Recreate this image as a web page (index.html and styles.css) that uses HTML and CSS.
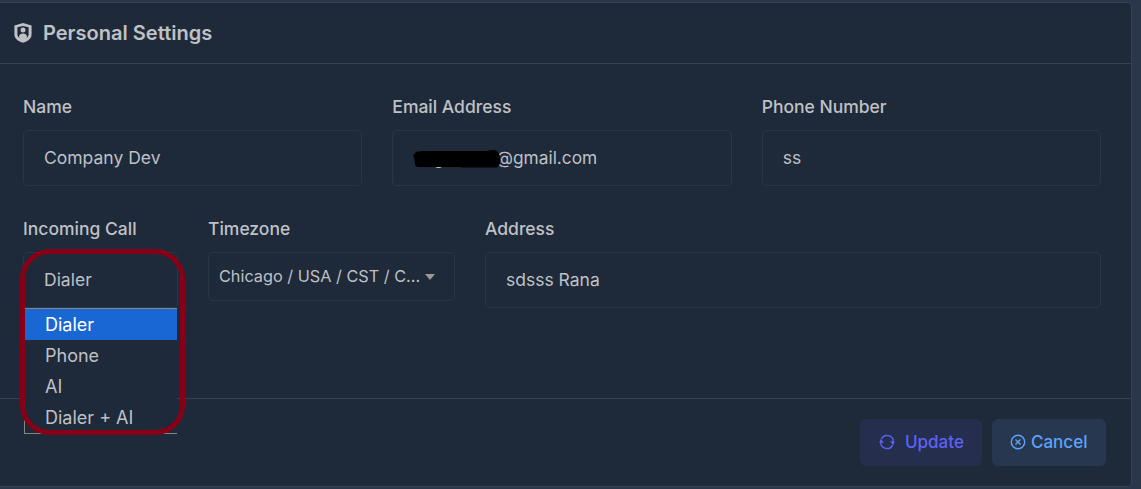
FILE: index.html
```html
<!DOCTYPE html>
<html lang="en">
<head>
<meta charset="utf-8">
<title>Personal Settings</title>
<link rel="stylesheet" href="styles.css">
</head>
<body>
<main class="card">
  <header class="card-header">
    <svg class="shield" viewBox="0 0 18 20" width="18" height="20">
      <path class="shield-body" fill-rule="evenodd" d="M9 0 17.6 2.6V11.5C17.6 15.8 13.5 18.3 9 19.8 4.5 18.3.4 15.8.4 11.5V2.6ZM9 2.9 3.4 4.2V11.2C3.4 12.8 4.2 14 5.5 15H12.5C13.8 14 14.6 12.8 14.6 11.2V4.2Z"/>
      <circle class="shield-body" cx="9" cy="7" r="2.5"/>
      <path class="shield-body" d="M4.8 14.2C5.2 11.7 6.8 10.6 9 10.6S12.8 11.7 13.2 14.2L9 16.8Z"/>
    </svg>
    <h1 class="title">Personal Settings</h1>
  </header>
  <section class="form">
    <div class="row row-contact">
      <div class="field"><span class="label">Name</span><div class="input">Company Dev</div></div>
      <div class="field"><span class="label">Email Address</span><div class="input email"><span class="masked">g<svg class="mask" viewBox="0 0 88 19" width="88" height="19"><path d="M3 2 9 1 75 1 77 0 82 0 85 2 87 6 87 14 84 17.5 49 17.5 47 17 4 17 2 15 1 7 0 6Z"/></svg></span>@gmail.com</div></div>
      <div class="field"><span class="label">Phone Number</span><div class="input">ss</div></div>
    </div>
    <div class="row row-call">
      <div class="field incoming">
        <span class="label">Incoming Call</span><div class="input">Dialer</div>
        <ul class="menu">
          <li class="option selected">Dialer</li>
          <li class="option">Phone</li>
          <li class="option">AI</li>
          <li class="option">Dialer + AI</li>
        </ul>
        <div class="highlight"></div>
      </div>
      <div class="field"><span class="label">Timezone</span><div class="input select"><span>Chicago / USA / CST / C...</span><i class="caret"></i></div></div>
      <div class="field"><span class="label">Address</span><div class="input">sdsss Rana</div></div>
    </div>
  </section>
  <footer class="card-footer">
    <button class="btn update"><svg class="btn-icon" viewBox="0 0 16 16" width="16" height="16"><path d="M2.4 4.9A6.3 6.3 0 0 1 14.3 7.5M1.7 8.5A6.3 6.3 0 0 0 13.6 11.1"/><path class="solid" d="M11 7.3H15.8L14.2 11.2ZM.2 8.7H5L1.8 4.8Z"/></svg><span>Update</span></button>
    <button class="btn cancel"><svg class="btn-icon" viewBox="0 0 16 16" width="16" height="16"><circle cx="8" cy="8" r="6.7"/><path d="M5.5 5.5 10.5 10.5M10.5 5.5 5.5 10.5"/></svg><span>Cancel</span></button>
  </footer>
</main>
</body>
</html>
```
FILE: styles.css
```css
* { box-sizing: border-box; }
body {
  margin: 0;
  padding-top: 2px;
  height: 489px;
  overflow: hidden;
  background: #2a364a;
  color: #bfc1c5;
  font: 400 17.5px/24px Inter, "Liberation Sans", sans-serif;
}
.card {
  display: flex;
  flex-direction: column;
  width: 1132px;
  height: 485px;
  background: #1e293a;
  border: 1px solid #364153;
  border-left: 0;
  border-radius: 0 5px 5px 0;
}
.card-header {
  display: flex;
  align-items: center;
  gap: 11px;
  height: 61px;
  padding-left: 14px;
  border-bottom: 1px solid #364153;
}
.shield-body { fill: #bfc1c5; }
.title { margin: 0; font-size: 20.05px; font-weight: 600; line-height: 28px; }
.form {
  display: flex;
  flex: 1;
  flex-direction: column;
  gap: 31px;
  padding: 31px 30px 0 23px;
}
.row { display: grid; column-gap: 30px; align-items: start; }
.row-contact { grid-template-columns: repeat(3, 1fr); }
.row-call { grid-template-columns: 155px 247px 1fr; }
.field { display: flex; flex-direction: column; gap: 11px; min-width: 0; }
.label { font-weight: 500; white-space: nowrap; }
.input {
  display: flex;
  align-items: center;
  height: 56px;
  padding: 0 20px;
  border: 1px solid #2a3546;
  border-radius: 5px;
  white-space: nowrap;
}
.email { font-size: 17.3px; }
.select { height: 49px; padding: 0 10px 2px; gap: 5px; font-size: 16.25px; }
.caret { margin-top: 2px; border: 5px solid transparent; border-top: 6px solid #999; border-bottom: 0; }
.masked { position: relative; width: 83px; padding-left: 20px; }
.mask { position: absolute; left: 0; top: 4px; }
.incoming { position: relative; }
.menu {
  position: absolute;
  top: 91px;
  left: 1px;
  width: 153px;
  height: 126px;
  margin: 0;
  padding: 0;
  list-style: none;
  background: #1e293a;
  border: 1px solid #858585;
  border-right: 0;
}
.option { height: 31px; padding-left: 20px; font-size: 18px; line-height: 32px; }
.selected { background: #1967d2; color: #fff; }
.highlight {
  position: absolute;
  top: 32px;
  left: -3px;
  width: 165px;
  height: 186px;
  border: 5px solid #880015;
  border-radius: 30px;
}
.card-footer {
  display: flex;
  justify-content: flex-end;
  gap: 10px;
  height: 88px;
  padding: 20px 25px 0 0;
  border-top: 1px solid #364153;
}
.btn {
  display: flex;
  align-items: center;
  height: 47px;
  padding: 0 0 1px 18px;
  border: 0;
  border-radius: 6px;
  font: 500 17px/24px Inter, sans-serif;
}
.update { width: 122px; gap: 10px; padding-left: 19px; background: #252e4d; color: #5b63f7; }
.cancel { width: 114px; gap: 5px; background: #27374f; color: #5ea3fa; }
.btn-icon { fill: none; stroke: currentColor; stroke-width: 1.4; }
.solid { fill: currentColor; stroke: none; }
```
